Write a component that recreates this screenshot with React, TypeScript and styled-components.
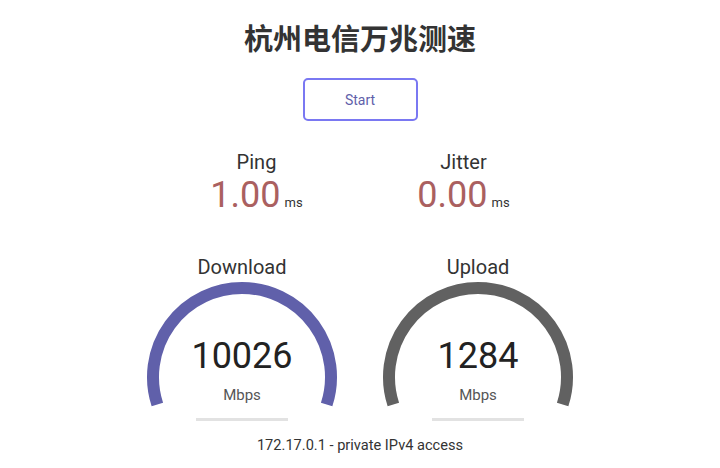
import React from "react";
import styled, { createGlobalStyle } from "styled-components";

const GlobalStyle = createGlobalStyle`
  html, body {
    margin: 0;
    padding: 0;
    background: #ffffff;
  }
  body {
    font-family: Roboto, "Noto Sans CJK SC", "Liberation Sans", sans-serif;
    color: #333333;
  }
`;

const Page = styled.div`
  width: 720px;
  height: 468px;
  display: flex;
  flex-direction: column;
  align-items: center;
  overflow: hidden;
`;

const Title = styled.h1`
  margin: 20px 0 0;
  font-family: Roboto, "Noto Sans CJK SC", sans-serif;
  font-size: 29px;
  font-weight: 700;
  line-height: 40px;
  color: #333333;
`;

const StartButton = styled.button`
  margin-top: 18px;
  width: 115px;
  height: 43px;
  box-sizing: border-box;
  border: 2px solid #7a78f2;
  border-radius: 5px;
  background: #ffffff;
  color: #6060aa;
  font-family: Roboto, sans-serif;
  font-size: 14px;
  cursor: pointer;
`;

const Row = styled.div<{ $top: number }>`
  display: flex;
  justify-content: center;
  margin-top: ${(p) => p.$top}px;
`;

const Metric = styled.div`
  width: 207px;
  display: flex;
  flex-direction: column;
  align-items: center;
`;

const Label = styled.div`
  font-size: 20px;
  line-height: 22px;
  color: #333333;
`;

const ValueLine = styled.div`
  margin-top: 2px;
  display: flex;
  align-items: baseline;
  gap: 4px;
  line-height: 40px;
`;

const Value = styled.span`
  font-size: 36px;
  color: #aa6060;
`;

const Unit = styled.span`
  font-size: 13px;
  color: #333333;
`;

const GaugeArea = styled.div`
  width: 236px;
  display: flex;
  flex-direction: column;
  align-items: center;
`;

const GaugeBox = styled.div`
  position: relative;
  width: 236px;
  height: 135px;
`;

const GaugeNumber = styled.div`
  position: absolute;
  left: 0;
  right: 0;
  top: 58px;
  text-align: center;
  font-size: 36px;
  line-height: 40px;
  color: #222222;
`;

const GaugeUnit = styled.div`
  position: absolute;
  left: 0;
  right: 0;
  top: 108px;
  text-align: center;
  font-size: 15px;
  line-height: 18px;
  color: #555555;
`;

const Progress = styled.div`
  margin-top: 5px;
  width: 92px;
  height: 3px;
  background: #e2e2e2;
`;

const IpInfo = styled.div`
  margin-top: 15px;
  font-size: 14.6px;
  line-height: 18px;
  color: #333333;
`;

const Gauge: React.FC<{ color: string; value: string }> = ({ color, value }) => (
  <GaugeBox>
    <svg width="236" height="135" viewBox="0 0 236 135">
      <path
        d="M 33.36 126.5 A 89 89 0 1 1 202.64 126.5"
        fill="none"
        stroke={color}
        strokeWidth="12"
      />
    </svg>
    <GaugeNumber>{value}</GaugeNumber>
    <GaugeUnit>Mbps</GaugeUnit>
  </GaugeBox>
);

export default function App() {
  return (
    <Page>
      <GlobalStyle />
      <Title>杭州电信万兆测速</Title>
      <StartButton>Start</StartButton>
      <Row $top={30}>
        <Metric>
          <Label>Ping</Label>
          <ValueLine>
            <Value>1.00</Value>
            <Unit>ms</Unit>
          </ValueLine>
        </Metric>
        <Metric>
          <Label>Jitter</Label>
          <ValueLine>
            <Value>0.00</Value>
            <Unit>ms</Unit>
          </ValueLine>
        </Metric>
      </Row>
      <Row $top={33}>
        <GaugeArea>
          <Label>Download</Label>
          <Gauge color="#6060aa" value="10026" />
          <Progress />
        </GaugeArea>
        <GaugeArea>
          <Label>Upload</Label>
          <Gauge color="#616161" value="1284" />
          <Progress />
        </GaugeArea>
      </Row>
      <IpInfo>172.17.0.1 - private IPv4 access</IpInfo>
    </Page>
  );
}
